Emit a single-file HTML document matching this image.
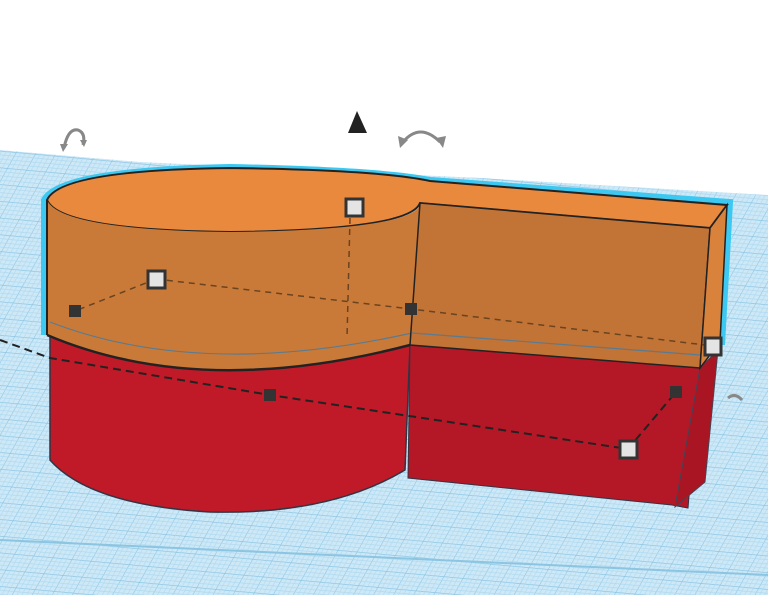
<!DOCTYPE html>
<html><head><meta charset="utf-8"><style>
html,body{margin:0;padding:0;background:#fff;}
svg{display:block;}
</style></head><body>
<svg width="768" height="595" viewBox="0 0 768 595" xmlns="http://www.w3.org/2000/svg">
<defs>
<pattern id="g" width="20" height="16" patternUnits="userSpaceOnUse" patternTransform="skewX(-25) rotate(5)">
<rect width="20" height="16" fill="#cde8f6"/>
<path d="M0 0H20M0 0V16" stroke="#86c3e4" stroke-width="1.2"/>
<path d="M0 4H20M0 8H20M0 12H20M5 0V16M10 0V16M15 0V16" stroke="#aed8ef" stroke-width="0.6"/>
</pattern>
</defs>
<rect width="768" height="595" fill="#fff"/>
<polygon points="0,150 140,162 480,178 768,195 768,595 0,595" fill="url(#g)"/>
<path d="M0 540 L768 575" stroke="#8cc5e2" stroke-width="2"/>
<!-- outline glow -->
<path d="M44 335 L44 200 Q60 170 230 167 Q380 170 430 180 L730 202 L722 345" fill="none" stroke="#3cc8f0" stroke-width="6"/>
<!-- orange top surface -->
<path d="M47 200 Q60 170 230 168 Q380 170 430 181 L727 205 L710 228 L420 203 Q410 230 230 232 Q60 230 47 200Z" fill="#e8893e" stroke="#222" stroke-width="2"/>
<!-- red lower cylinder -->
<path d="M50 335 Q200 390 410 345 L405 470 Q330 515 210 512 Q90 505 50 460Z" fill="#c01a28" stroke="#334" stroke-width="1.5"/>
<!-- red box front -->
<path d="M410 345 L700 368 L688 508 L672 505 L408 478Z" fill="#b41826" stroke="#334" stroke-width="1"/>
<path d="M700 368 L718 350 L705 482 L675 507 Z" fill="#a91522" stroke="#445" stroke-width="1"/>
<!-- orange cylinder front -->
<path d="M47 200 Q60 230 230 232 Q410 230 420 205 L410 345 Q200 400 47 335Z" fill="#c97a38"/>
<path d="M47 335 Q200 400 410 345" fill="none" stroke="#222" stroke-width="2.5"/>
<path d="M50 322 Q200 380 412 333" fill="none" stroke="#5a7a90" stroke-width="1.2"/>
<!-- orange box front -->
<path d="M420 203 L710 228 L700 368 L410 345Z" fill="#c27336" stroke="#222" stroke-width="1.5"/>
<path d="M412 333 L700 355" stroke="#5a7a90" stroke-width="1.2"/>
<path d="M710 228 L727 205 L720 342 L700 368Z" fill="#d9823c" stroke="#222" stroke-width="1.5"/>
<path d="M47 200 L47 335" stroke="#222" stroke-width="2"/>
<!-- dashed lines -->
<g fill="none" stroke="#6a4420" stroke-width="1.5" stroke-dasharray="6,5">
<path d="M156 279 L75 311"/><path d="M156 279 L411 309 L713 346"/><path d="M350 218 L347 338"/>
</g>
<g fill="none" stroke="#222" stroke-width="2" stroke-dasharray="8,5">
<path d="M0 340 L50 358 L270 395 L628 449 L676 392"/>
</g>
<!-- handles -->
<g fill="#333">
<rect x="69" y="305" width="12" height="12"/><rect x="405" y="303" width="12" height="12"/>
<rect x="264" y="389" width="12" height="12"/><rect x="670" y="386" width="12" height="12"/>
</g>
<g fill="#e4e4e4" stroke="#333" stroke-width="3">
<rect x="346" y="199" width="17" height="17"/><rect x="148" y="271" width="17" height="17"/>
<rect x="705" y="338" width="16" height="17"/><rect x="620" y="441" width="17" height="17"/>
</g>
<!-- controls -->
<polygon points="357,111 348,133 367,133" fill="#222"/>
<g fill="none" stroke="#888" stroke-width="3">
<path d="M64 148 Q68 128 78 130 Q86 133 83 145"/>
<path d="M403 142 Q420 122 440 142"/>
<path d="M728 398 Q735 392 742 400"/>
</g>
<g fill="#888">
<polygon points="60,144 68,144 63,152"/><polygon points="80,140 87,140 84,147"/>
<polygon points="398,136 408,140 400,148"/><polygon points="436,138 446,136 443,148"/>
</g>
</svg>
</body></html>
